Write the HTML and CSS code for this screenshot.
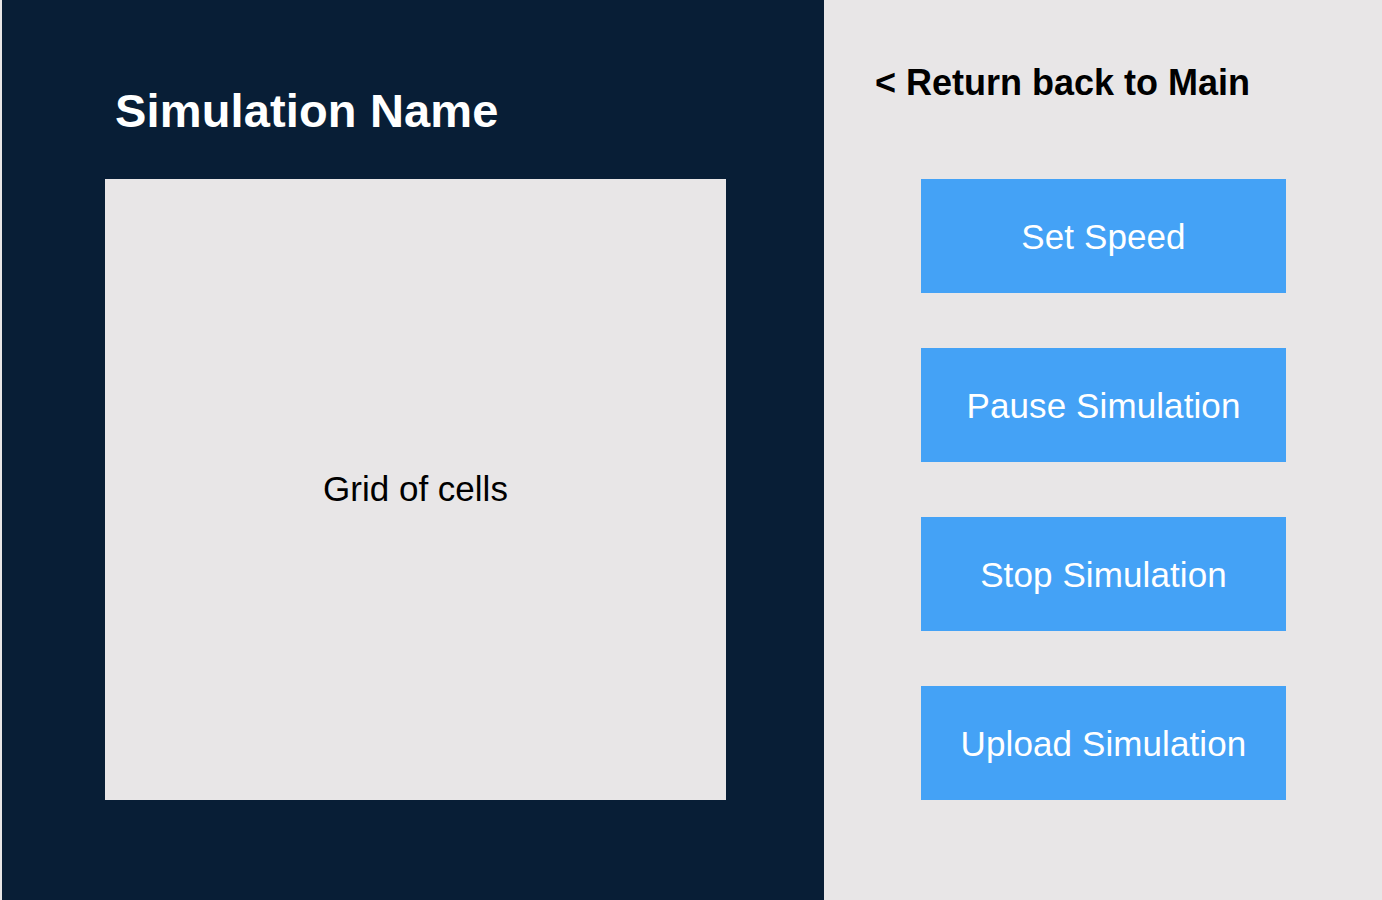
FILE: index.html
```html
<!DOCTYPE html>
<html lang="en">
<head>
<meta charset="utf-8">
<title>Simulation</title>
<link rel="stylesheet" href="styles.css">
</head>
<body>
<div class="page">
  <section class="sim-panel">
    <h1 class="sim-title">Simulation Name</h1>
    <div class="grid-box">Grid of cells</div>
  </section>
  <aside class="control-panel">
    <a class="back-link" href="#">&lt; Return back to Main</a>
    <div class="buttons">
      <button class="ctrl-btn">Set Speed</button>
      <button class="ctrl-btn">Pause Simulation</button>
      <button class="ctrl-btn">Stop Simulation</button>
      <button class="ctrl-btn">Upload Simulation</button>
    </div>
  </aside>
</div>
</body>
</html>
```
FILE: styles.css
```css
html, body {
  margin: 0;
  padding: 0;
  background: #e8e6e7;
  font-family: "Liberation Sans", Arial, Helvetica, sans-serif;
}
.page {
  display: flex;
  width: 1382px;
  height: 900px;
  padding-left: 2px;
  box-sizing: border-box;
}
.sim-panel {
  width: 822px;
  height: 900px;
  background: #081e36;
  box-sizing: border-box;
  padding: 87px 0 0 103px;
  display: flex;
  flex-direction: column;
}
.sim-title {
  margin: 0 0 45px 0;
  padding-left: 10px;
  font-size: 47px;
  line-height: 47px;
  letter-spacing: 0.15px;
  font-weight: bold;
  color: #ffffff;
}
.grid-box {
  width: 621px;
  height: 621px;
  background: #e8e6e7;
  color: #000;
  font-size: 35px;
  padding-bottom: 2px;
  box-sizing: border-box;
  display: flex;
  align-items: center;
  justify-content: center;
}
.control-panel {
  flex: 1;
  background: #e8e6e7;
  padding: 65px 0 0 51px;
  display: flex;
  flex-direction: column;
}
.back-link {
  font-size: 36px;
  line-height: 36px;
  font-weight: bold;
  color: #000;
  text-decoration: none;
  margin-bottom: 78px;
}
.buttons {
  display: flex;
  flex-direction: column;
  gap: 55px;
  padding-left: 46px;
}
.ctrl-btn {
  width: 365px;
  height: 114px;
  border: none;
  background: #44a2f6;
  color: #fff;
  font-family: inherit;
  font-size: 35px;
  letter-spacing: 0.1px;
  padding: 2px 0 0 0;
  cursor: pointer;
}
```
